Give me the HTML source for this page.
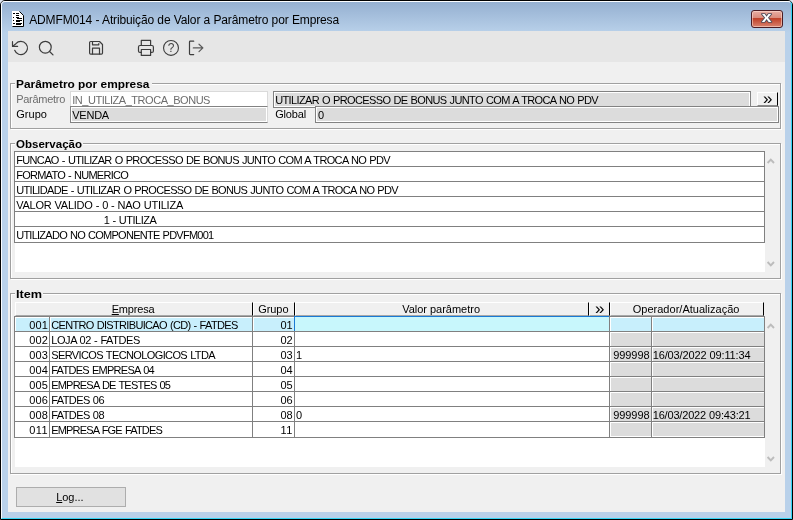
<!DOCTYPE html>
<html lang="pt-BR"><head><meta charset="utf-8"><title>ADMFM014 - Atribuição de Valor a Parâmetro por Empresa</title>
<style>
html,body{margin:0;padding:0;width:793px;height:520px;overflow:hidden;background:#dfe6f1;}
body{position:relative;font-family:"Liberation Sans",sans-serif;font-size:11px;color:#000;}
div,span{position:absolute;box-sizing:border-box;}
.win{left:0;top:0;width:793px;height:520px;border:1px solid #000;border-radius:5px 5px 0 0;background:linear-gradient(#94afd0 0px,#b9d1ea 32px,#b9d1ea 100%);overflow:hidden;}
.hl{left:1px;top:1px;width:791px;height:518px;border-radius:4px 4px 0 0;border-top:1px solid #fbfdff;border-left:1px solid #f8fbfe;border-right:1px solid #35d5f5;border-bottom:1px solid #35d5f5;}
.client{left:8px;top:31px;width:777px;height:481px;background:#f0f0f0;}
.tb{left:8px;top:31px;width:777px;height:31px;background:#e6e6e6;}
.t{white-space:pre;line-height:14px;height:14px;}
u{text-decoration:underline;text-underline-offset:1px;}
.gbg{border:1px solid #a0a0a0;}
.gbw{border:1px solid #fff;}
.lg{background:#f0f0f0;height:12px;}
.sunk{border:1px solid #828282;background:#dcdcdc;box-shadow:inset 0 0 0 1px #fff;}
.hc{top:302px;height:14px;background:#f0f0f0;border-top:1px solid #fff;border-left:1px solid #fff;border-right:1px solid #000;border-bottom:1px solid #a8a8a8;}
.row{left:14px;width:751px;height:16px;border:1px solid #808080;background:#fff;}
.vs{width:1px;background:#808080;}
.gc{background:#dcdcdc;height:13px;}
.close{left:751px;top:10px;width:32px;height:18px;border:1px solid #4b1c24;border-radius:3px;background:linear-gradient(#e9aea3 0%,#d98a7b 44%,#bf3f27 47%,#d9826f 100%);box-shadow:inset 0 0 0 1px rgba(255,225,215,.55);}
svg{position:absolute;overflow:visible;}
.txt{left:0;top:0;width:793px;height:520px;will-change:transform;}

</style></head>
<body>
<div class="win"></div>
<div class="hl"></div>
<!-- title icon -->
<svg style="left:12px;top:11px" width="12" height="16" viewBox="0 0 12 16">
<path d="M0 0H7L11 4V15H0Z" fill="#fff"/>
<path d="M7 0L11 4V15H0" fill="none" stroke="#000" stroke-width="1" transform="translate(.5,.5)"/>
<g fill="#000"><rect x="1" y="2" width="2" height="1"/><rect x="4" y="2" width="3" height="1"/><rect x="4" y="4" width="3" height="1"/><rect x="1" y="6" width="1" height="1"/><rect x="4" y="6" width="3" height="1"/><rect x="5" y="7" width="5" height="1"/><rect x="1" y="9" width="1" height="1"/><rect x="4" y="9" width="6" height="1"/><rect x="4" y="10" width="4" height="1"/><rect x="1" y="12" width="2" height="1"/><rect x="4" y="12" width="6" height="1"/><rect x="4" y="13" width="5" height="1"/></g>
</svg>
<div class="close"></div>
<svg style="left:755px;top:10px;will-change:transform" width="24" height="18" viewBox="0 0 24 18"><text x="11.600" y="12.100" text-anchor="middle" font-family="Liberation Sans, sans-serif" font-weight="bold" font-size="14" fill="#fff" stroke="#4e4e5c" stroke-width="1.600" stroke-linejoin="round" paint-order="stroke" transform="translate(11.600 0) scale(1.25 1) translate(-11.600 0)">x</text></svg>
<div class="client"></div>
<div class="tb"></div>
<!-- toolbar icons -->
<svg style="left:8px;top:31px;will-change:transform" width="220" height="31" viewBox="8 31 220 31" fill="none" stroke="#3c3c3c" stroke-width="1.200" stroke-linecap="round" stroke-linejoin="round">
<!-- undo -->
<path d="M12.500 41.700V46.400H17.600"/><path d="M12.800 46.200L15.900 43.700A6.600 6.600 0 1 1 14.700 50.300"/>
<!-- search -->
<circle cx="45.300" cy="47.200" r="5.900"/><path d="M49.600 51.500L53 54.900"/>
<!-- save -->
<path d="M90.700 41.500H99.500L102.500 44.500V53Q102.500 54.100 101.400 54.100H90.700Q89.600 54.100 89.600 53V42.600Q89.600 41.500 90.700 41.500Z"/><path d="M92.500 41.700V44.800H98.800V43.500"/><path d="M92.500 54V48.200H99.500V54"/>
<!-- print -->
<path d="M141.300 45.400V40.400H150.600V45.400"/><path d="M141.300 52.400H140Q138.500 52.400 138.500 50.900V47Q138.500 45.500 140 45.500H151.900Q153.400 45.500 153.400 47V50.900Q153.400 52.400 151.900 52.400H150.600"/><path d="M141.300 49.500H150.600V55.400H141.300Z"/>
<!-- help -->
<circle cx="171" cy="47.900" r="7.450" stroke-width="1.100"/><text x="171.100" y="52.100" text-anchor="middle" font-family="Liberation Sans, sans-serif" font-size="12" fill="#444" stroke="none">?</text>
<!-- exit -->
<path d="M193.700 41.200H190.300Q189.500 41.200 189.500 42V53.800Q189.500 54.600 190.300 54.600H193.700"/><path d="M193.300 47.900H202.700M199 44.200L202.900 47.900L199 51.600" stroke="#5a5a5a"/>
</svg>

<!-- group 1 -->
<div class="gbw" style="left:11px;top:84px;width:771px;height:46px"></div>
<div class="gbg" style="left:10px;top:83px;width:771px;height:46px"></div>
<div class="lg" style="left:15px;top:78px;width:137px"></div>
<div style="left:70px;top:91px;width:198px;height:16px;background:#fff;border:1px solid #dadada;border-bottom:none"></div>
<div class="sunk" style="left:70px;top:106px;width:198px;height:17px;border-right-color:#dadada"></div>
<div class="sunk" style="left:273px;top:91px;width:478px;height:17px"></div>
<div class="sunk" style="left:315px;top:106px;width:464px;height:17px"></div>
<div style="left:757px;top:92px;width:21px;height:14px;background:#f0f0f0;border-top:1px solid #fff;border-left:1px solid #fff;border-right:1px solid #000;border-bottom:1px solid #8a8a8a"></div>

<!-- group 2 -->
<div class="gbw" style="left:11px;top:144px;width:771px;height:136px"></div>
<div class="gbg" style="left:10px;top:143px;width:771px;height:136px"></div>
<div class="lg" style="left:15px;top:138px;width:68px"></div>
<div style="left:15px;top:151px;width:750px;height:121px;background:#fff"></div>
<div class="row" style="top:151px"></div>
<div class="row" style="top:166px"></div>
<div class="row" style="top:181px"></div>
<div class="row" style="top:196px"></div>
<div class="row" style="top:211px"></div>
<div class="row" style="top:226px;height:17px"></div>
<svg style="left:767px;top:158px" width="8" height="6" viewBox="0 0 8 6"><path d="M.6 5L3.800 1.600L7 5" fill="none" stroke="#bcbcbc" stroke-width="1.900"/></svg>
<svg style="left:767px;top:261px" width="8" height="6" viewBox="0 0 8 6"><path d="M.6 1L3.800 4.400L7 1" fill="none" stroke="#bcbcbc" stroke-width="1.900"/></svg>

<!-- group 3 -->
<div class="gbw" style="left:11px;top:294px;width:771px;height:181px"></div>
<div class="gbg" style="left:10px;top:293px;width:771px;height:181px"></div>
<div class="lg" style="left:15px;top:288px;width:28px"></div>
<div style="left:15px;top:316px;width:750px;height:151px;background:#fff"></div>
<!-- header -->
<div class="hc" style="left:15px;width:238px"></div>
<div class="hc" style="left:253px;width:42px"></div>
<div class="hc" style="left:295px;width:294px"></div>
<div class="hc" style="left:589px;width:21px"></div>
<div class="hc" style="left:610px;width:154px"></div>
<!-- rows -->
<div class="row" style="top:316px"></div>
<div class="gc" style="left:16px;top:318px;width:33px;background:#c8effc"></div>
<div class="gc" style="left:51px;top:318px;width:201px;background:#c8effc"></div>
<div class="gc" style="left:254px;top:318px;width:40px;background:#c8effc"></div>
<div style="left:294px;top:316px;width:315px;height:15px;background:#c8f7fc;border-top:1px solid #1a7ad4;border-left:1px solid #1a7ad4"></div>
<div class="gc" style="left:611px;top:318px;width:40px;background:#c8effc"></div>
<div class="gc" style="left:653px;top:318px;width:111px;background:#c8effc"></div>
<div class="row" style="top:331px"></div>
<div class="gc" style="left:611px;top:333px;width:40px;background:#dcdcdc"></div>
<div class="gc" style="left:653px;top:333px;width:111px;background:#dcdcdc"></div>
<div class="row" style="top:346px"></div>
<div class="gc" style="left:611px;top:348px;width:40px;background:#dcdcdc"></div>
<div class="gc" style="left:653px;top:348px;width:111px;background:#dcdcdc"></div>
<div class="row" style="top:361px"></div>
<div class="gc" style="left:611px;top:363px;width:40px;background:#dcdcdc"></div>
<div class="gc" style="left:653px;top:363px;width:111px;background:#dcdcdc"></div>
<div class="row" style="top:376px"></div>
<div class="gc" style="left:611px;top:378px;width:40px;background:#dcdcdc"></div>
<div class="gc" style="left:653px;top:378px;width:111px;background:#dcdcdc"></div>
<div class="row" style="top:391px"></div>
<div class="gc" style="left:611px;top:393px;width:40px;background:#dcdcdc"></div>
<div class="gc" style="left:653px;top:393px;width:111px;background:#dcdcdc"></div>
<div class="row" style="top:406px"></div>
<div class="gc" style="left:611px;top:408px;width:40px;background:#dcdcdc"></div>
<div class="gc" style="left:653px;top:408px;width:111px;background:#dcdcdc"></div>
<div class="row" style="top:421px;height:17px"></div>
<div class="gc" style="left:611px;top:423px;width:40px;background:#dcdcdc"></div>
<div class="gc" style="left:653px;top:423px;width:111px;background:#dcdcdc"></div>
<div class="vs" style="left:49px;top:317px;height:121px"></div>
<div class="vs" style="left:252px;top:317px;height:121px"></div>
<div class="vs" style="left:609px;top:317px;height:121px"></div>
<div class="vs" style="left:651px;top:317px;height:121px"></div>
<div class="vs" style="left:294px;top:332px;height:106px"></div>
<svg style="left:767px;top:323px" width="8" height="6" viewBox="0 0 8 6"><path d="M.6 5L3.800 1.600L7 5" fill="none" stroke="#bcbcbc" stroke-width="1.900"/></svg>
<svg style="left:767px;top:456px" width="8" height="6" viewBox="0 0 8 6"><path d="M.6 1L3.800 4.400L7 1" fill="none" stroke="#bcbcbc" stroke-width="1.900"/></svg>

<!-- button -->
<div style="left:16px;top:487px;width:110px;height:20px;background:#e1e1e1;border:1px solid #adadad"></div>

<div class="txt">
<span class="t" style="left:29.2px;top:12.84px;font-size:12px;letter-spacing:-0.133px;word-spacing:0.133px;">ADMFM014 - Atribuição de Valor a Parâmetro por Empresa</span>
<span class="t" style="left:16.2px;top:77.19px;font-weight:bold;transform-origin:0 0;transform:scaleX(1.0802);">Parâmetro por empresa</span>
<span class="t" style="left:16.2px;top:92.19px;color:#6d6d6d;letter-spacing:-0.284px;">Parâmetro</span>
<span class="t" style="left:16.2px;top:107.19px;letter-spacing:0.044px;">Grupo</span>
<span class="t" style="left:72.2px;top:93.19px;color:#6d6d6d;letter-spacing:-0.460px;">IN_UTILIZA_TROCA_BONUS</span>
<span class="t" style="left:72.2px;top:108.19px;letter-spacing:-0.221px;">VENDA</span>
<span class="t" style="left:275.2px;top:93.19px;letter-spacing:-0.629px;word-spacing:0.629px;">UTILIZAR O PROCESSO DE BONUS JUNTO COM A TROCA NO PDV</span>
<span class="t" style="left:275.2px;top:107.19px;letter-spacing:-0.166px;">Global</span>
<span class="t" style="left:318px;top:108.19px;">0</span>
<span class="t" style="left:16.2px;top:137.19px;font-weight:bold;transform-origin:0 0;transform:scaleX(1.0479);">Observação</span>
<span class="t" style="left:16.2px;top:153.19px;letter-spacing:-0.645px;word-spacing:0.645px;">FUNCAO - UTILIZAR O PROCESSO DE BONUS JUNTO COM A TROCA NO PDV</span>
<span class="t" style="left:16.2px;top:168.19px;letter-spacing:-0.741px;word-spacing:0.741px;">FORMATO - NUMERICO</span>
<span class="t" style="left:16.2px;top:183.19px;letter-spacing:-0.665px;word-spacing:0.665px;">UTILIDADE - UTILIZAR O PROCESSO DE BONUS JUNTO COM A TROCA NO PDV</span>
<span class="t" style="left:16.2px;top:198.19px;letter-spacing:-0.241px;word-spacing:0.241px;">VALOR VALIDO - 0 - NAO UTILIZA</span>
<span class="t" style="left:103.7px;top:213.19px;letter-spacing:-0.449px;word-spacing:0.449px;">1 - UTILIZA</span>
<span class="t" style="left:16.2px;top:228.19px;letter-spacing:-0.742px;word-spacing:0.742px;">UTILIZADO NO COMPONENTE PDVFM001</span>
<span class="t" style="left:16.2px;top:287.19px;font-weight:bold;transform-origin:0 0;transform:scaleX(1.1536);">Item</span>
<span class="t" style="left:111.7px;top:302.19px;letter-spacing:-0.176px;"><u>E</u>mpresa</span>
<span class="t" style="left:258.2px;top:302.19px;letter-spacing:-0.056px;">Grupo</span>
<span class="t" style="left:402.2px;top:302.19px;letter-spacing:-0.019px;word-spacing:0.019px;">Valor parâmetro</span>
<span class="t" style="left:595px;top:301.71px;font-size:17px;">»</span>
<span class="t" style="left:632.7px;top:302.19px;letter-spacing:0.020px;">Operador/Atualização</span>
<span class="t" style="left:763px;top:91.71px;font-size:17px;">»</span>
<span class="t" style="left:29.2px;top:318.19px;letter-spacing:0.147px;">001</span>
<span class="t" style="left:51.2px;top:318.19px;letter-spacing:-0.667px;word-spacing:0.667px;">CENTRO DISTRIBUICAO (CD) - FATDES</span>
<span class="t" style="left:280.6px;top:318.19px;letter-spacing:-0.125px;">01</span>
<span class="t" style="left:29.2px;top:333.19px;letter-spacing:0.147px;">002</span>
<span class="t" style="left:51.2px;top:333.19px;letter-spacing:-0.396px;word-spacing:0.396px;">LOJA 02 - FATDES</span>
<span class="t" style="left:280.6px;top:333.19px;letter-spacing:-0.125px;">02</span>
<span class="t" style="left:29.2px;top:348.19px;letter-spacing:0.147px;">003</span>
<span class="t" style="left:51.2px;top:348.19px;letter-spacing:-0.612px;word-spacing:0.612px;">SERVICOS TECNOLOGICOS LTDA</span>
<span class="t" style="left:280.6px;top:348.19px;letter-spacing:-0.125px;">03</span>
<span class="t" style="left:296px;top:348.19px;">1</span>
<span class="t" style="left:613.2px;top:348.19px;letter-spacing:-0.070px;">999998</span>
<span class="t" style="left:652.7px;top:348.19px;letter-spacing:-0.129px;word-spacing:0.129px;">16/03/2022 09:11:34</span>
<span class="t" style="left:29.2px;top:363.19px;letter-spacing:0.147px;">004</span>
<span class="t" style="left:51.2px;top:363.19px;letter-spacing:-0.714px;word-spacing:0.714px;">FATDES EMPRESA 04</span>
<span class="t" style="left:280.6px;top:363.19px;letter-spacing:-0.125px;">04</span>
<span class="t" style="left:29.2px;top:378.19px;letter-spacing:0.147px;">005</span>
<span class="t" style="left:51.2px;top:378.19px;letter-spacing:-0.792px;word-spacing:0.792px;">EMPRESA DE TESTES 05</span>
<span class="t" style="left:280.6px;top:378.19px;letter-spacing:-0.125px;">05</span>
<span class="t" style="left:29.2px;top:393.19px;letter-spacing:0.147px;">006</span>
<span class="t" style="left:51.2px;top:393.19px;letter-spacing:-0.558px;word-spacing:0.558px;">FATDES 06</span>
<span class="t" style="left:280.6px;top:393.19px;letter-spacing:-0.125px;">06</span>
<span class="t" style="left:29.2px;top:408.19px;letter-spacing:0.147px;">008</span>
<span class="t" style="left:51.2px;top:408.19px;letter-spacing:-0.558px;word-spacing:0.558px;">FATDES 08</span>
<span class="t" style="left:280.6px;top:408.19px;letter-spacing:-0.125px;">08</span>
<span class="t" style="left:296px;top:408.19px;">0</span>
<span class="t" style="left:613.2px;top:408.19px;letter-spacing:-0.070px;">999998</span>
<span class="t" style="left:652.7px;top:408.19px;letter-spacing:-0.174px;word-spacing:0.174px;">16/03/2022 09:43:21</span>
<span class="t" style="left:29.2px;top:423.19px;letter-spacing:0.418px;">011</span>
<span class="t" style="left:51.2px;top:423.19px;letter-spacing:-0.818px;word-spacing:0.818px;">EMPRESA FGE FATDES</span>
<span class="t" style="left:280.6px;top:423.19px;letter-spacing:0.289px;">11</span>
<span class="t" style="left:56.2px;top:490.19px;letter-spacing:-0.039px;"><u>L</u>og...</span>
</div>

</body></html>
